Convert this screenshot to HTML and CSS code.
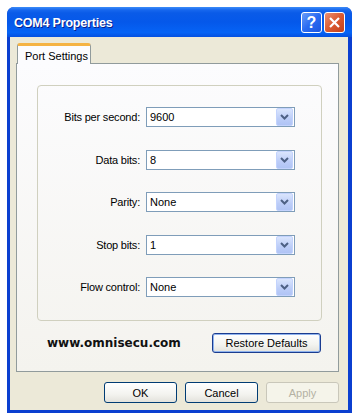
FILE: index.html
```html
<!DOCTYPE html>
<html lang="en">
<head>
    <meta charset="utf-8" />
    <title>COM4 Properties</title>
    <link rel="stylesheet" href="styles.css">
</head>
<body>
    <div class="window">
        <div class="titlebar">
            <span class="title">COM4 Properties</span>
            <div class="caption-buttons">
                <span class="cap-btn help">?</span>
                <span class="cap-btn close">
                    <svg width="13" height="13" viewBox="0 0 13 13"><path d="M2 2 L11 11 M11 2 L2 11" stroke="#fff" stroke-width="2.2" fill="none"/></svg>
                </span>
            </div>
        </div>

        <div class="client">
            <div class="tabs">
                <div class="tab active">Port Settings</div>
            </div>

            <div class="panel">
                <div class="group">
                    <label class="field-label">Bits per second:</label>
                    <div class="combo"><span>9600</span><span class="drop"><svg width="9" height="6" viewBox="0 0 9 6"><path d="M1 1 L4.5 4.5 L8 1" stroke="#4d6185" stroke-width="2" fill="none"/></svg></span></div>

                    <label class="field-label">Data bits:</label>
                    <div class="combo"><span>8</span><span class="drop"><svg width="9" height="6" viewBox="0 0 9 6"><path d="M1 1 L4.5 4.5 L8 1" stroke="#4d6185" stroke-width="2" fill="none"/></svg></span></div>

                    <label class="field-label">Parity:</label>
                    <div class="combo"><span>None</span><span class="drop"><svg width="9" height="6" viewBox="0 0 9 6"><path d="M1 1 L4.5 4.5 L8 1" stroke="#4d6185" stroke-width="2" fill="none"/></svg></span></div>

                    <label class="field-label">Stop bits:</label>
                    <div class="combo"><span>1</span><span class="drop"><svg width="9" height="6" viewBox="0 0 9 6"><path d="M1 1 L4.5 4.5 L8 1" stroke="#4d6185" stroke-width="2" fill="none"/></svg></span></div>

                    <label class="field-label">Flow control:</label>
                    <div class="combo"><span>None</span><span class="drop"><svg width="9" height="6" viewBox="0 0 9 6"><path d="M1 1 L4.5 4.5 L8 1" stroke="#4d6185" stroke-width="2" fill="none"/></svg></span></div>
                </div>

                <div class="panel-footer">
                    <span class="site">www.omnisecu.com</span>
                    <button type="button" class="btn restore">Restore Defaults</button>
                </div>
            </div>

            <div class="dialog-buttons">
                <button type="button" class="btn">OK</button>
                <button type="button" class="btn">Cancel</button>
                <button type="button" class="btn disabled">Apply</button>
            </div>
        </div>
    </div>
</body>
</html>
```

FILE: styles.css
```css
body {
    margin: 0;
    background: #fff;
    font-family: "Liberation Sans", Arial, sans-serif;
    font-size: 11px;
}

.window {
    margin: 7px 0 0 7px;
    width: 345px;
    height: 406px;
    box-sizing: border-box;
    background: #0b3fd0;
    border-radius: 7px 7px 0 0;
    display: flex;
    flex-direction: column;
}

.titlebar {
    height: 30px;
    display: flex;
    align-items: center;
    justify-content: space-between;
    padding: 0 7px 0 7px;
    border-radius: 7px 7px 0 0;
    background: linear-gradient(#3c8cf8 0, #1767ee 3px, #0a5be8 6px, #0558ea 50%, #0663f5 85%, #0550e0 100%);
}

.title {
    color: #fff;
    font-weight: bold;
    font-size: 12.5px;
    letter-spacing: -0.2px;
    text-shadow: 1px 1px 0 #0a1e8c;
    margin-top: 1px;
}

.caption-buttons {
    display: flex;
    gap: 2px;
    margin-top: 1px;
}

.cap-btn {
    width: 19px;
    height: 19px;
    border: 1px solid #fff;
    border-radius: 3px;
    display: flex;
    align-items: center;
    justify-content: center;
}

.help {
    background: linear-gradient(135deg, #6a9cf8 0, #2a6cf2 50%, #1b55e0 100%);
    color: #fff;
    font-weight: bold;
    font-size: 16px;
}

.close {
    background: linear-gradient(135deg, #ea8f72 0, #db5a30 50%, #c2401c 100%);
}

.client {
    flex: 1;
    margin: 0 4px 3px 3px;
    background: #ece9d8;
    display: flex;
    flex-direction: column;
    padding: 6px 9px 7px 6px;
}

.tabs {
    display: flex;
    height: 20px;
    padding-left: 1px;
}

.tab {
    position: relative;
    z-index: 1;
    box-sizing: border-box;
    width: 74px;
    height: 21px;
    padding: 4px 0 0 7px;
    background: #fcfcfe;
    border: 1px solid #919b9c;
    border-top: 3px solid #f5b343;
    border-bottom: none;
    border-radius: 3px 3px 0 0;
    color: #000;
}

.panel {
    height: 309px;
    box-sizing: border-box;
    border: 1px solid #919b9c;
    background: linear-gradient(#fcfcfe, #f4f3ee);
    padding: 21px 16px 18px 20px;
    display: flex;
    flex-direction: column;
}

.group {
    height: 236px;
    box-sizing: border-box;
    border: 1px solid #d0d0bf;
    border-radius: 4px;
    padding: 21px 0 0 0;
    display: grid;
    grid-template-columns: 102px 149px;
    column-gap: 6px;
    row-gap: 22.5px;
    align-content: start;
    align-items: center;
}

.field-label {
    text-align: right;
    color: #000;
    letter-spacing: -0.2px;
}

.combo {
    height: 20px;
    box-sizing: border-box;
    border: 1px solid #7f9db9;
    background: #fff;
    display: flex;
    align-items: center;
    justify-content: space-between;
    padding: 0 1px 0 3px;
}

.drop {
    width: 15px;
    height: 16px;
    border: 1px solid #c3d3fd;
    border-radius: 2px;
    background: linear-gradient(#dae5fd, #bccdf8 60%, #b0c4f5);
    display: flex;
    align-items: center;
    justify-content: center;
}

.panel-footer {
    margin-top: 12px;
    display: flex;
    align-items: center;
    justify-content: space-between;
    padding: 0 1px 0 10px;
}

.site {
    font-family: "DejaVu Sans", Verdana, sans-serif;
    font-weight: bold;
    font-size: 12px;
    color: #111;
    letter-spacing: 0;
}

.btn {
    height: 21px;
    box-sizing: border-box;
    border: 1px solid #003c74;
    border-radius: 3px;
    background: linear-gradient(#fff 0, #f3f3ef 60%, #e3e2dc 100%);
    font-family: "Liberation Sans", Arial, sans-serif;
    font-size: 11px;
    color: #000;
    padding: 0;
}

.restore {
    width: 109px;
    height: 20px;
    border-color: #1b3c8f;
    box-shadow: inset 0 0 0 1px #8fb3ee;
}

.dialog-buttons {
    margin-top: 10px;
    display: flex;
    justify-content: flex-end;
    gap: 8px;
    padding-right: 0;
}

.dialog-buttons .btn {
    width: 73px;
}

.btn.disabled {
    border-color: #c9c7ba;
    background: #f5f4ea;
    color: #b4b1a3;
}
```
